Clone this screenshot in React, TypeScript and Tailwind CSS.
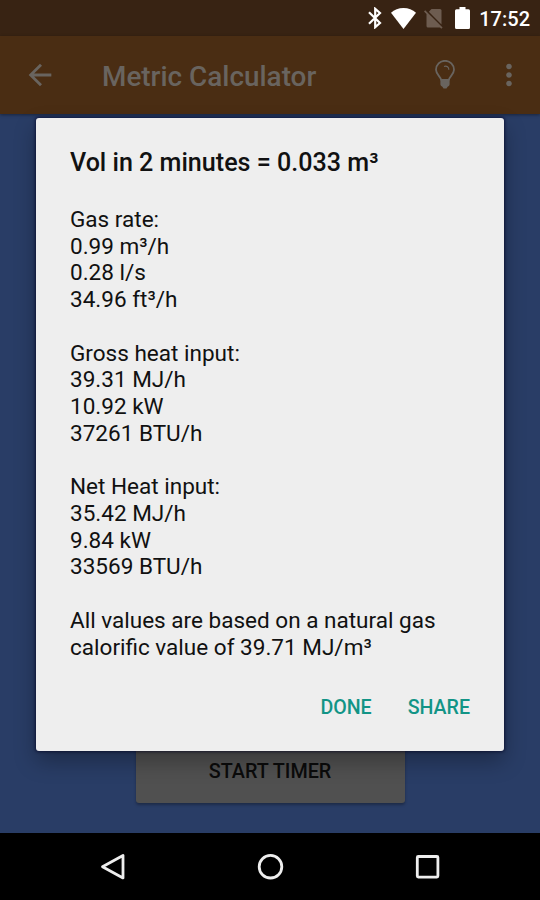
import { MdArrowBack, MdMoreVert } from "react-icons/md";

const results = [
  { title: "Gas rate:", values: ["0.99 m³/h", "0.28 l/s", "34.96 ft³/h"] },
  { title: "Gross heat input:", values: ["39.31 MJ/h", "10.92 kW", "37261 BTU/h"] },
  { title: "Net Heat input:", values: ["35.42 MJ/h", "9.84 kW", "33569 BTU/h"] },
];

function StatusBar() {
  return (
    <div className="flex h-9 shrink-0 items-center justify-end bg-[#382313] pr-[10px] text-white">
      <svg
        aria-hidden="true"
        className="mr-[9px] h-[22px] w-[14px]"
        viewBox="0 0 14 22"
        fill="none"
        stroke="currentColor"
        strokeWidth="2.200"
      >
        <path d="M1 5.200 12 16l-4.800 4.200V1.800L12 6 1 16.800" />
      </svg>
      <svg aria-hidden="true" className="mr-2 h-[21px] w-[25px]" viewBox="0 0 25 21" fill="currentColor">
        <path d="M12.500 21 0 4.800C3.300 1.700 7.600 0 12.500 0S21.700 1.700 25 4.800z" />
      </svg>
      <svg aria-hidden="true" className="mr-3 h-[21px] w-[19px] text-[#6d5c50]" viewBox="0 0 19 21" fill="currentColor">
        <path d="M7.500 1h8.500q1.500 0 1.500 1.500v14L4.800 3.700z" />
        <path d="M1.200 2.200 0 3.500 2.500 6v12q0 1.500 1.500 1.500h12l1.300 1.300 1.300-1.300z" />
      </svg>
      <svg aria-hidden="true" className="mr-[9px] h-[22px] w-[15px]" viewBox="0 0 15 22" fill="currentColor">
        <path d="M4.500 0h6v2.300h3Q15 2.300 15 3.800v16.700q0 1.500-1.500 1.500h-12Q0 22 0 20.500V3.800q0-1.500 1.500-1.500h3z" />
      </svg>
      <span className="pt-[2px] text-[20px] leading-none font-medium">17:52</span>
    </div>
  );
}

function Toolbar() {
  return (
    <header className="flex h-[78px] shrink-0 items-center bg-[#4a2d13] pr-[14px] pl-[23px] text-[#69645f] shadow-[0_1px_3px_rgba(0,0,0,0.4)]">
      <MdArrowBack className="size-[34px]" />
      <h1 className="ml-[45px] flex-1 pt-[3px] text-[27.900px] leading-none font-medium">Metric Calculator</h1>
      <svg aria-hidden="true" className="mr-[37px] h-[30px] w-5" viewBox="0 0 20 30" fill="none">
        <path
          d="M6.300 20.500C6.300 17 1 14.800 1 9.800a9 9 0 0 1 18 0c0 5-5.300 7.200-5.300 10.700"
          stroke="currentColor"
          strokeWidth="1.800"
        />
        <path d="M9 6.500c2.800-1 5 .8 4.800 3.300" stroke="currentColor" strokeWidth="1.200" />
        <path d="M5.400 19h9.200v5.500q0 1.500-2 2.200L11.500 28.500h-3l-1.100-1.800q-2-.7-2-2.200z" fill="currentColor" />
      </svg>
      <MdMoreVert className="size-[34px]" />
    </header>
  );
}

function NavigationBar() {
  return (
    <nav className="flex h-[67px] shrink-0 items-center justify-between bg-black px-[99px] text-[#eeeeee]">
      <svg aria-label="Back" className="size-7" viewBox="0 0 28 28" fill="none" stroke="currentColor" strokeWidth="2.800">
        <path d="M24 2.500v22.400L3.500 13.700z" strokeLinejoin="round" />
      </svg>
      <svg aria-label="Home" className="size-7" viewBox="0 0 28 28" fill="none" stroke="currentColor" strokeWidth="2.800">
        <circle cx="14.500" cy="13.700" r="11.300" />
      </svg>
      <svg aria-label="Recents" className="size-7" viewBox="0 0 28 28" fill="none" stroke="currentColor" strokeWidth="2.800">
        <rect x="4.300" y="3.500" width="20.600" height="20.600" rx="1" />
      </svg>
    </nav>
  );
}

function ResultDialog() {
  return (
    <div
      role="dialog"
      className="absolute top-[118px] left-9 flex h-[633px] w-[468px] flex-col rounded-[3px] bg-[#eeeeee] px-[34px] text-[#111111] shadow-[0_10px_22px_rgba(0,0,0,0.3),0_0_3px_1px_rgba(0,0,40,0.6)]"
    >
      <h2 className="mt-[31px] text-[25.100px] leading-[28px] font-medium whitespace-nowrap">
        Vol in 2 minutes = 0.033 m³
      </h2>
      <div className="mt-[30px] text-[22.540px] leading-[26.720px] whitespace-nowrap">
        {results.map((group) => (
          <section key={group.title} className="mb-[26.720px]">
            <h3>{group.title}</h3>
            {group.values.map((value) => (
              <p key={value}>{value}</p>
            ))}
          </section>
        ))}
        <p>
          All values are based on a natural gas
          <br />
          calorific value of 39.71 MJ/m³
        </p>
      </div>
      <div className="mt-[35px] flex justify-end gap-9 text-[19.600px] leading-6 font-medium text-[#129486]">
        <button type="button">DONE</button>
        <button type="button">SHARE</button>
      </div>
    </div>
  );
}

export default function App() {
  return (
    <div className="relative flex h-[900px] w-[540px] flex-col overflow-hidden bg-[#293d66] font-['Roboto',sans-serif]">
      <StatusBar />
      <Toolbar />
      <main className="flex flex-1 flex-col items-center justify-end pb-[30px]">
        <button
          type="button"
          className="h-16 w-[269px] rounded-[3px] bg-[#505050] pt-[2px] text-[19.800px] font-medium text-[#0b0b0b] shadow-[0_2px_3px_rgba(0,0,0,0.3)]"
        >
          START TIMER
        </button>
      </main>
      <NavigationBar />
      <ResultDialog />
    </div>
  );
}
